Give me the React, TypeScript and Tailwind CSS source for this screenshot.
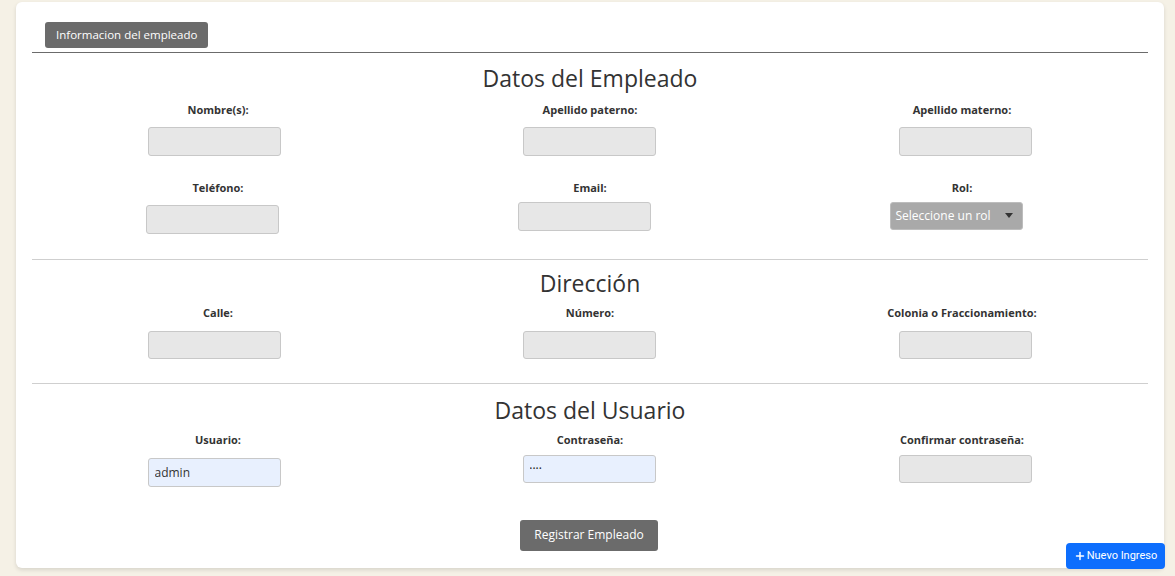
import { Plus } from "lucide-react";

type FieldProps = {
  label: string;
  top?: string;
  shift?: string;
  value?: string;
  type?: string;
  filled?: boolean;
  h?: string;
};

const Field = ({ label, top = "mt-[10px]", shift = "", value = "", type = "text", filled = false, h = "h-[29px]" }: FieldProps) => {
  return (
    <div className="flex flex-col items-center">
      <label className="text-[11px] leading-[14px] font-bold text-[#333]">{label}</label>
      <input
        type={type}
        defaultValue={value}
        className={`${top} ${shift} ${h} w-[133px] rounded-[3px] border border-[#c8c8c8] px-[6px] text-[#333] outline-none ${
          filled ? "bg-[#e8f0fe]" : "bg-[#e7e7e7]"
        } ${type === "password" ? "text-[7px] tracking-[0.5px]" : "text-[12px]"}`}
      />
    </div>
  );
};

const SectionTitle = ({ children, className = "" }: { children: React.ReactNode; className?: string }) => (
  <h2 className={`text-center text-[23px] leading-[26px] text-[#333] ${className}`}>{children}</h2>
);

const App = () => {
  return (
    <div className="min-h-[576px] bg-[#f5f1e6] pl-4 pr-[11px] pt-[2px] pb-2" style={{ fontFamily: '"Open Sans", "Noto Sans", sans-serif' }}>
      <div className="h-[566px] rounded-md bg-white px-4 pt-[19px] shadow-[0_2px_4px_rgba(0,0,0,0.12)]">
        {/* Tab */}
        <div className="pl-[13px]">
          <button className="h-[26px] rounded-[3px] bg-[#6b6b6b] px-[11px] text-[11.5px] text-white">
            Informacion del empleado
          </button>
        </div>
        <hr className="mt-[4px] border-t border-[#6b6b6b]" />

        {/* Datos del Empleado */}
        <SectionTitle className="mt-3">Datos del Empleado</SectionTitle>
        <div className="mt-3 grid grid-cols-3">
          <Field label="Nombre(s):" shift="-translate-x-[4px]" />
          <Field label="Apellido paterno:" shift="-translate-x-[1px]" />
          <Field label="Apellido materno:" shift="translate-x-[3px]" />
        </div>
        <div className="mt-[25px] grid grid-cols-3">
          <Field label="Teléfono:" shift="-translate-x-[6px]" />
          <Field label="Email:" top="mt-[7px]" shift="-translate-x-[6px]" />
          <div className="flex flex-col items-center">
            <label className="text-[11px] leading-[14px] font-bold text-[#333]">Rol:</label>
            <div className="mt-[7px] flex h-[28px] w-[133px] -translate-x-[6px] items-center justify-between rounded-[3px] border border-[#bdbdbd] bg-[#a9a9a9] pl-[5px] pr-[9px] text-[12px] text-white">
              <span>Seleccione un rol</span>
              <svg width="8" height="5" viewBox="0 0 8 5">
                <path d="M0 0h8L4 5z" fill="#333" />
              </svg>
            </div>
          </div>
        </div>
        <hr className="mt-[25px] border-t border-[#cfcfcf]" />

        {/* Dirección */}
        <SectionTitle className="mt-[10px]">Dirección</SectionTitle>
        <div className="mt-[10px] grid grid-cols-3">
          <Field label="Calle:" shift="-translate-x-[4px]" top="mt-[11px]" h="h-[28px]" />
          <Field label="Número:" shift="-translate-x-[1px]" top="mt-[11px]" h="h-[28px]" />
          <Field label="Colonia o Fraccionamiento:" shift="translate-x-[3px]" top="mt-[11px]" h="h-[28px]" />
        </div>
        <hr className="mt-[24px] border-t border-[#cfcfcf]" />

        {/* Datos del Usuario */}
        <SectionTitle className="mt-[13px]">Datos del Usuario</SectionTitle>
        <div className="mt-[10px] grid grid-cols-3">
          <Field label="Usuario:" value="admin" filled top="mt-[11px]" shift="-translate-x-[4px]" />
          <Field label="Contraseña:" value="1234" type="password" filled top="mt-[8px]" shift="-translate-x-[1px]" h="h-[28px]" />
          <Field label="Confirmar contraseña:" top="mt-[8px]" shift="translate-x-[3px]" h="h-[28px]" />
        </div>
        <div className="mt-[33px] flex justify-center">
          <button className="h-[31px] w-[138px] -translate-x-[1px] rounded-[3px] bg-[#6b6b6b] text-[12px] text-white">
            Registrar Empleado
          </button>
        </div>
      </div>

      <button
        className="fixed right-[10px] bottom-[7px] flex h-[26px] w-[99px] items-center justify-center gap-[1px] rounded-[4px] bg-[#0d6efd] text-[11px] text-white"
        style={{ fontFamily: "Roboto, sans-serif" }}
      >
        <Plus size={12} strokeWidth={3} />
        Nuevo Ingreso
      </button>
    </div>
  );
};

export default App;
